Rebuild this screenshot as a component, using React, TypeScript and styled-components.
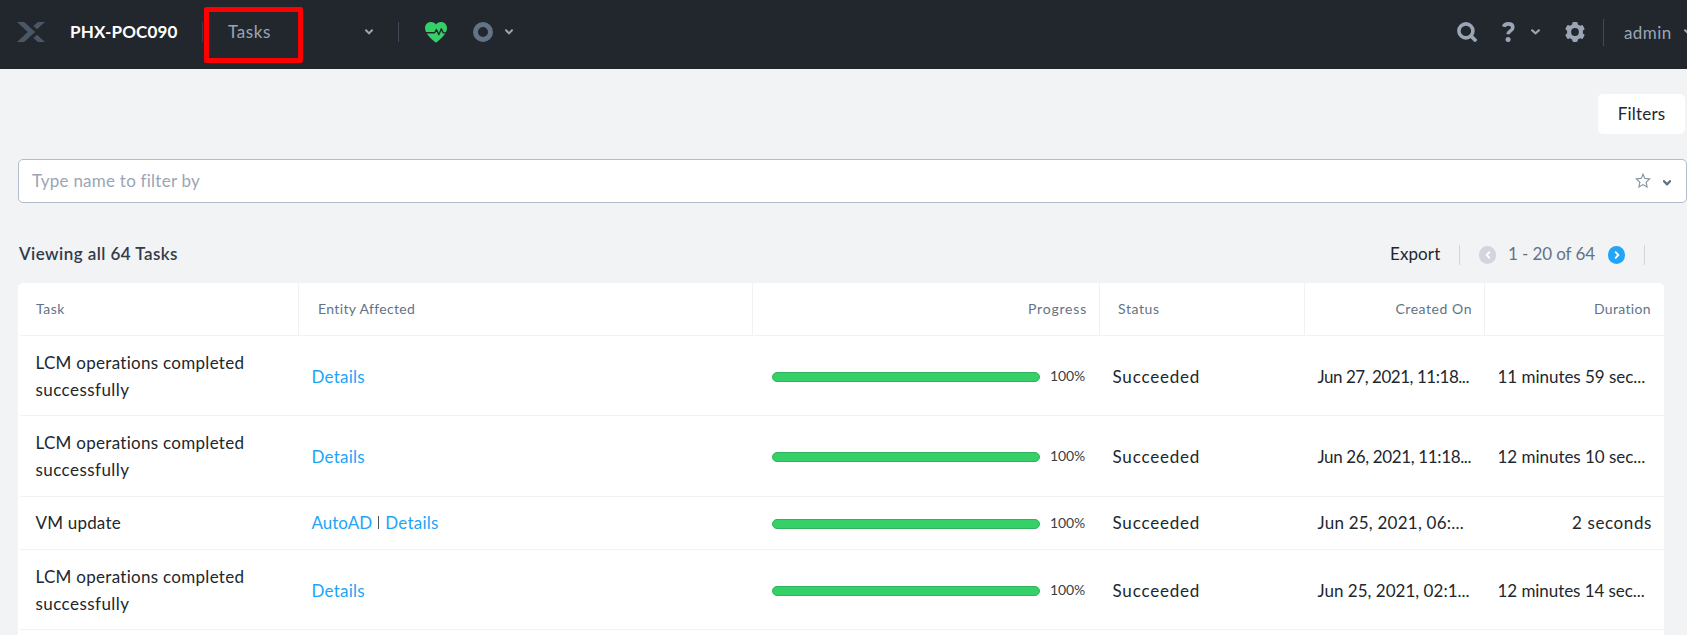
import React from "react";
import styled, { createGlobalStyle, css } from "styled-components";

const GlobalStyle = createGlobalStyle`
  * { box-sizing: border-box; }
  html, body { margin: 0; padding: 0; overflow: hidden; }
  body { background: #f2f3f5; font-family: Lato, "Liberation Sans", sans-serif; font-size: 17px; color: #22272e; }
`;

const Page = styled.div`
  height: 635px;
  overflow: hidden;
  display: flex;
  flex-direction: column;
`;

const Text = styled.span<{ $track?: number }>`
  white-space: nowrap;
  letter-spacing: ${(p) => p.$track ?? 0}px;
`;

/* ---------- top bar ---------- */

const TopBar = styled.header`
  position: relative;
  flex: none;
  height: 69px;
  padding: 0 0 5px 17px;
  display: flex;
  align-items: center;
  justify-content: space-between;
  background: #22272e;
  color: #9aa5b5;
  svg { display: block; flex: none; }
`;

const BarGroup = styled.div`
  display: flex;
  align-items: center;
`;

const RightGroup = styled(BarGroup)`
  width: 230px;
  flex: none;
`;

const ClusterName = styled(Text)`
  width: 132px;
  margin-left: 25px;
  padding-bottom: 1px;
  font-weight: 700;
  color: #fff;
`;

const Divider = styled.i<{ $height: number; $color: string }>`
  flex: none;
  width: 1px;
  height: ${(p) => p.$height}px;
  background: ${(p) => p.$color};
`;

const MenuLabel = styled(Text)`
  width: 137px;
  margin-left: 25px;
  padding-bottom: 1px;
`;

const Slot = styled.span<{ $before: number }>`
  flex: none;
  margin-left: ${(p) => p.$before}px;
`;

const Highlight = styled.div`
  position: absolute;
  left: 204px;
  top: 7px;
  width: 99px;
  height: 56px;
  border: 5px solid #f00;
  border-radius: 2px;
`;

/* ---------- filter area ---------- */

const FilterRow = styled.div`
  flex: none;
  display: flex;
  justify-content: flex-end;
  padding: 25px 2px 25px 0;
`;

const FilterButton = styled.button`
  width: 87px;
  height: 40px;
  padding: 0 0 2px;
  border: 0;
  border-radius: 5px;
  background: #fff;
  color: #22272e;
  font: inherit;
`;

const SearchField = styled.div`
  flex: none;
  height: 44px;
  margin-left: 18px;
  padding: 0 15px 2px 13px;
  display: flex;
  align-items: center;
  border: 1px solid #b3bccb;
  border-radius: 5px;
  background: #fff;
  color: #9aa5b5;
`;

const Placeholder = styled(Text)`
  flex: 1;
`;

const SearchTools = styled.div`
  display: flex;
  align-items: center;
  gap: 12px;
  svg { display: block; }
  svg:last-child { margin-top: 5px; }
`;

/* ---------- summary line ---------- */

const Summary = styled.div`
  flex: none;
  height: 80px;
  padding: 23px 42px 0 18px;
  display: flex;
  align-items: center;
  justify-content: space-between;
`;

const Heading = styled(Text)`
  padding: 0 0 2px 1px;
  font-weight: 600;
  color: #323c49;
`;

const Pager = styled.div`
  display: flex;
  align-items: center;
  color: #627386;
  svg { display: block; }
`;

const ExportLink = styled(Text)`
  width: 69px;
  padding-bottom: 2px;
  color: #22272e;
`;

const Range = styled(Text)`
  width: 98px;
  padding: 0 0 2px 12px;
`;

const PageButton = styled.span<{ $active?: boolean }>`
  flex: none;
  width: 17px;
  height: 18px;
  border-radius: 9px;
  display: grid;
  place-items: center;
  background: ${(p) => (p.$active ? "#22a5f7" : "#d1d6dc")};
`;

/* ---------- table ---------- */

const Table = styled.div`
  flex: none;
  width: 1646px;
  margin-left: 18px;
  border-radius: 5px 5px 0 0;
  background: #fff;
`;

const columns = css`
  display: grid;
  grid-template-columns: 281px 454px 347px 205px 180px 179px;
`;

const HeaderRow = styled.div`
  ${columns}
  height: 53px;
  background: linear-gradient(#f1f2f4, #f1f2f4) 2px 100% / 100% 1px no-repeat;
`;

const HeaderCell = styled.div<{ $right?: boolean }>`
  display: flex;
  align-items: center;
  justify-content: ${(p) => (p.$right ? "flex-end" : "flex-start")};
  padding: 0 12px 2px 18px;
  border-right: 1px solid #eff1f3;
  font-size: 14px;
  color: #627386;
  &:last-child { border-right-color: transparent; }
  &:nth-child(2) { padding-left: 19px; }
`;

const Row = styled.div<{ $height: number }>`
  ${columns}
  height: ${(p) => p.$height}px;
  grid-template-rows: ${(p) => Math.min(p.$height, 80)}px;
  background: linear-gradient(#f1f2f4, #f1f2f4) 2px 100% / 100% 1px no-repeat;
`;

const Cell = styled.div<{ $short?: boolean }>`
  display: flex;
  align-items: center;
  padding: 0 12px ${(p) => (p.$short ? 2 : 0)}px 12.5px;
  min-width: 0;
`;

const TaskCell = styled(Cell)`
  flex-direction: column;
  align-items: flex-start;
  justify-content: center;
  padding-left: 17.5px;
  line-height: 27px;
`;

const EntityCell = styled(Cell)`
  gap: 6px;
`;

const ProgressCell = styled(Cell)`
  padding: 0 0 1px 19px;
  gap: 10px;
`;

const Link = styled(Text)`
  color: #22a5f7;
`;

const Pipe = styled.i`
  width: 1px;
  height: 13px;
  background: #4d535b;
`;

const Bar = styled.div`
  width: 268px;
  height: 10px;
  margin-top: 2.4px;
  border: 1px solid #30b35a;
  border-radius: 5px;
  background: #36d068;
`;

const Percent = styled(Text)`
  margin-bottom: 1px;
  font-size: 14px;
  color: #3a3f46;
`;

const DurationCell = styled(Cell)<{ $right?: boolean }>`
  justify-content: ${(p) => (p.$right ? "flex-end" : "flex-start")};
`;

/* ---------- icons ---------- */

const Chevron = ({ w = 8, color = "#9aa5b5", stroke = 2 }: { w?: number; color?: string; stroke?: number }) => (
  <svg width={w} height="6" viewBox="0 0 8 6" fill="none" stroke={color} strokeWidth={stroke} strokeLinecap="round" strokeLinejoin="round" preserveAspectRatio="none">
    <path d="M1 1.2 4 4.4 7 1.2" />
  </svg>
);

const LogoIcon = () => (
  <svg width="28" height="20" viewBox="0 0 28 20" fill="#4b5666">
    <path d="M0 0h7.2l11 10-11 10H0l10.8-10z" />
    <path d="M21 0h7l-8 7.3-3.6-3.2zM16.4 15.9l3.6-3.2 8 7.3h-7z" />
  </svg>
);

const HeartIcon = () => (
  <svg width="22" height="21" viewBox="0 0 22 21">
    <path fill="#36d068" d="M11 2.4C12.6.7 14.2 0 16 0c3.5 0 6 2.600 6 6.100 0 5.200-5.200 10.100-11 14.700C5.200 16.200 0 11.300 0 6.100 0 2.600 2.500 0 6 0c1.800 0 3.400.7 5 2.400z" />
    <path fill="none" stroke="#22272e" strokeWidth="1.4" strokeLinejoin="round" d="M0 10.800h9.700l1.700-3.300 2.400 5.200 2.500-5.800 2 4h3.700" />
  </svg>
);

const RingIcon = () => (
  <svg width="20" height="20" viewBox="0 0 20 20">
    <circle cx="10" cy="10" r="7.5" fill="none" stroke="#627386" strokeWidth="5" />
  </svg>
);

const SearchIcon = () => (
  <svg width="20" height="20" viewBox="0 0 20 20" fill="none" stroke="#9aa5b5">
    <circle cx="8.900" cy="8.900" r="7" strokeWidth="3.600" />
    <path d="m14 14 4 4" strokeWidth="3.800" strokeLinecap="round" />
  </svg>
);

const HelpIcon = () => (
  <svg width="13" height="20" viewBox="0 0 13 20" fill="none" stroke="#9aa5b5">
    <path d="M1.700 4.800C2.300 2.900 4 1.900 6.300 1.900c2.700 0 4.500 1.300 4.500 3.500 0 3.600-4.700 3.300-4.700 6.900" strokeWidth="3.600" />
    <circle cx="6.100" cy="17.400" r="2.500" fill="#9aa5b5" stroke="none" />
  </svg>
);

const GearIcon = () => (
  <svg width="20" height="20" viewBox="0 0 20 20">
    <g fill="#9aa5b5">
      {[0, 60, 120].map((a) => (
        <rect key={a} x="7.300" y="0" width="5.400" height="20" rx="1.400" transform={`rotate(${a} 10 10)`} />
      ))}
      <circle cx="10" cy="10" r="8" />
    </g>
    <circle cx="10" cy="10" r="3.900" fill="#22272e" />
  </svg>
);

const StarIcon = () => (
  <svg width="16" height="15" viewBox="0 0 16 15" fill="none" stroke="#8290a3" strokeWidth="1.100" strokeLinejoin="miter">
    <path d="m8 1.200 1.800 4.200 5 .5-3.700 3.300 1 4.800L8 11.600 3.900 14l1-4.800L1.200 5.900l5-.5z" />
  </svg>
);

const Arrow = ({ left }: { left?: boolean }) => (
  <svg width="6" height="8" viewBox="0 0 6 8" fill="none" stroke="#fff" strokeWidth="1.900" strokeLinecap="round">
    <path d={left ? "M4.300 1.200 1.700 4l2.600 2.800" : "M1.700 1.200 4.300 4 1.700 6.800"} />
  </svg>
);

/* ---------- data ---------- */

type Label = [text: string, track: number];

interface Task {
  height: number;
  name: Label[];
  links: Label[];
  created: Label;
  duration: Label;
  short?: boolean;
}

const lcm: Label[] = [["LCM operations completed", 0.29], ["successfully", 0.44]];
const details: Label = ["Details", 0.25];

const tasks: Task[] = [
  { height: 80, name: lcm, links: [details], created: ["Jun 27, 2021, 11:18...", -0.46], duration: ["11 minutes 59 sec...", -0.03] },
  { height: 81, name: lcm, links: [details], created: ["Jun 26, 2021, 11:18...", -0.36], duration: ["12 minutes 10 sec...", -0.03] },
  { height: 53, name: [["VM update", 0.2]], links: [["AutoAD", 0], details], created: ["Jun 25, 2021, 06:...", 0.23], duration: ["2 seconds", 0.6], short: true },
  { height: 80, name: lcm, links: [details], created: ["Jun 25, 2021, 02:1...", 0.02], duration: ["12 minutes 14 sec...", -0.06] },
  { height: 80, name: [], links: [], created: ["", 0], duration: ["", 0] },
];

const headers: { label: Label; right?: boolean }[] = [
  { label: ["Task", 0.55] },
  { label: ["Entity Affected", 0.35] },
  { label: ["Progress", 0.8], right: true },
  { label: ["Status", 0.6] },
  { label: ["Created On", 0.55], right: true },
  { label: ["Duration", 0.35], right: true },
];

export default function App() {
  return (
    <Page>
      <GlobalStyle />
      <TopBar>
        <BarGroup>
          <LogoIcon />
          <ClusterName $track={0.15}>PHX-POC090</ClusterName>
          <Divider $height={20} $color="#36404d" />
          <MenuLabel $track={0.6}>Tasks</MenuLabel>
          <Chevron />
          <Slot $before={25}><Divider as="div" $height={20} $color="#404b59" /></Slot>
          <Slot $before={26}><HeartIcon /></Slot>
          <Slot $before={26}><RingIcon /></Slot>
          <Slot $before={12}><Chevron /></Slot>
        </BarGroup>
        <RightGroup>
          <SearchIcon />
          <Slot $before={25}><HelpIcon /></Slot>
          <Slot $before={16}><Chevron w={9} /></Slot>
          <Slot $before={25}><GearIcon /></Slot>
          <Slot $before={18}><Divider as="div" $height={27} $color="#404b59" /></Slot>
          <Slot $before={20}><Text $track={0.4}>admin</Text></Slot>
          <Slot $before={12}><Chevron w={9} /></Slot>
        </RightGroup>
        <Highlight />
      </TopBar>

      <FilterRow>
        <FilterButton><Text $track={0.2}>Filters</Text></FilterButton>
      </FilterRow>
      <SearchField>
        <Placeholder $track={0.24}>Type name to filter by</Placeholder>
        <SearchTools>
          <StarIcon />
          <Chevron color="#627386" stroke={2.3} />
        </SearchTools>
      </SearchField>

      <Summary>
        <Heading $track={0.44}>Viewing all 64 Tasks</Heading>
        <Pager>
          <ExportLink $track={0.1}>Export</ExportLink>
          <Divider $height={20} $color="#d1d6dc" />
          <Slot $before={19}><PageButton><Arrow left /></PageButton></Slot>
          <Range $track={-0.1}>1 - 20 of 64</Range>
          <Slot $before={14}><PageButton $active><Arrow /></PageButton></Slot>
          <Slot $before={19}><Divider as="div" $height={20} $color="#d1d6dc" /></Slot>
        </Pager>
      </Summary>

      <Table>
        <HeaderRow>
          {headers.map(({ label, right }) => (
            <HeaderCell key={label[0]} $right={right}><Text $track={label[1]}>{label[0]}</Text></HeaderCell>
          ))}
        </HeaderRow>
        {tasks.map((t, i) => (
          <Row key={i} $height={t.height}>
            {t.name.length > 0 && (
              <>
                <TaskCell $short={t.short}>
                  {t.name.map(([s, k]) => <Text key={s} $track={k}>{s}</Text>)}
                </TaskCell>
                <EntityCell $short={t.short}>
                  {t.links.map(([s, k], n) => (
                    <React.Fragment key={s}>
                      {n > 0 && <Pipe />}
                      <Link $track={k}>{s}</Link>
                    </React.Fragment>
                  ))}
                </EntityCell>
                <ProgressCell>
                  <Bar />
                  <Percent $track={-0.1}>100%</Percent>
                </ProgressCell>
                <Cell $short={t.short}><Text $track={0.8}>Succeeded</Text></Cell>
                <Cell $short={t.short}><Text $track={t.created[1]}>{t.created[0]}</Text></Cell>
                <DurationCell $short={t.short} $right={t.short}><Text $track={t.duration[1]}>{t.duration[0]}</Text></DurationCell>
              </>
            )}
          </Row>
        ))}
      </Table>
    </Page>
  );
}
